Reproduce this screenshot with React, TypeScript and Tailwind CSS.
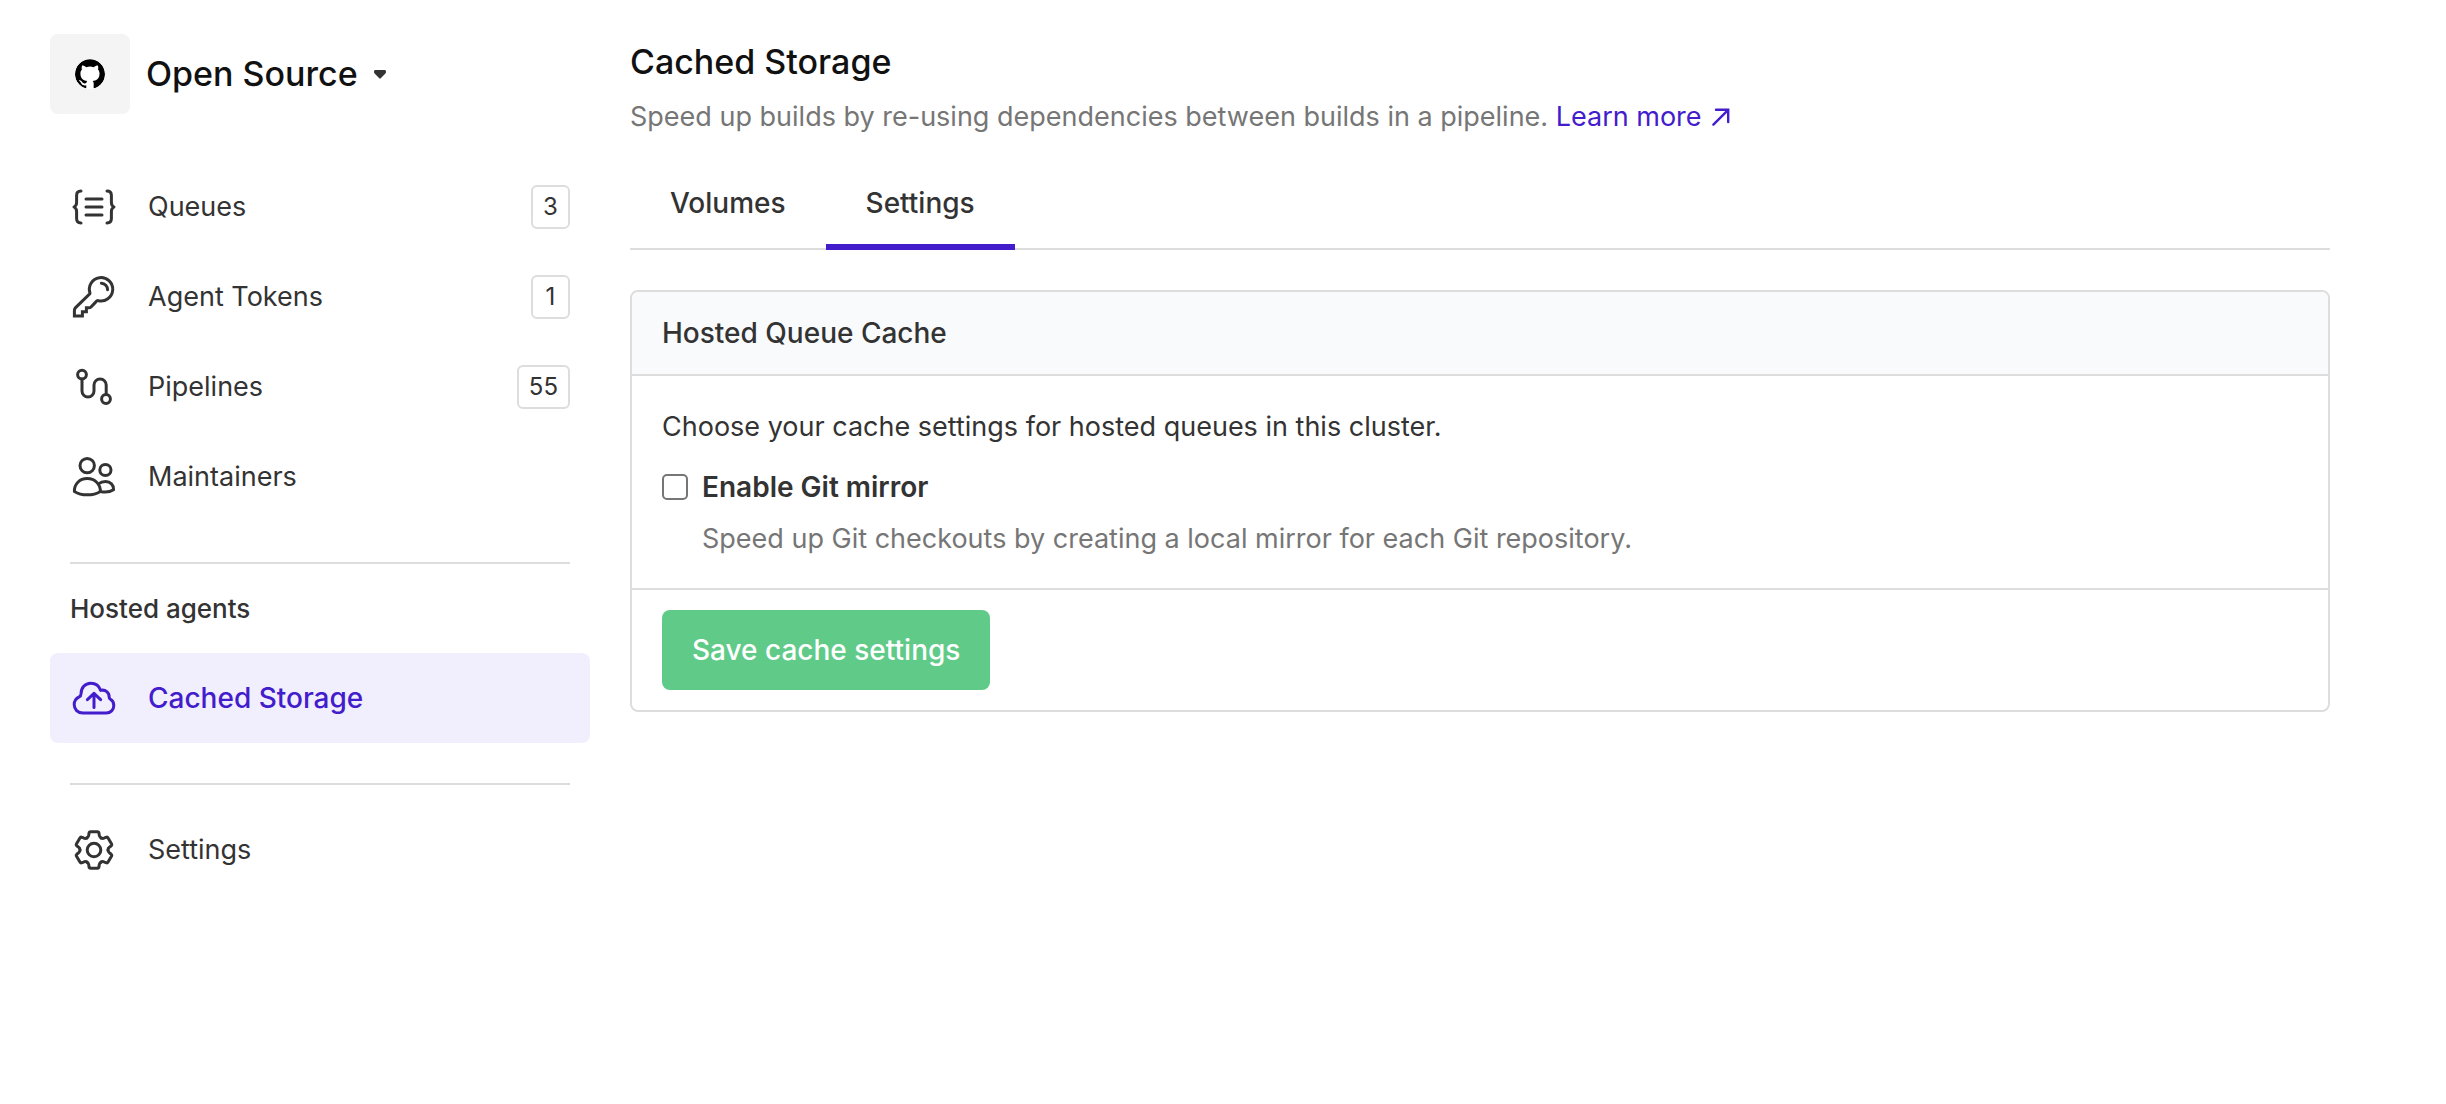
import type { ReactNode } from "react";
import { SiGithub } from "react-icons/si";

function Icon({ children }: { children: ReactNode }) {
  return (
    <svg
      viewBox="0 0 48 48"
      className="size-12 shrink-0"
      fill="none"
      stroke="currentColor"
      strokeWidth="3"
      strokeLinecap="round"
      strokeLinejoin="round"
      aria-hidden="true"
    >
      {children}
    </svg>
  );
}

const QueuesIcon = () => (
  <Icon>
    <path d="M11 8 C8 8 6.6 9.6 6.6 12.4 V19.6 C6.6 22 5.8 23.2 4 24 C5.8 24.8 6.6 26 6.6 28.4 V35.6 C6.6 38.4 8 40 11 40" />
    <path d="M37 8 C40 8 41.4 9.6 41.4 12.4 V19.6 C41.4 22 42.2 23.2 44 24 C42.2 24.8 41.4 26 41.4 28.4 V35.6 C41.4 38.4 40 40 37 40" />
    <path d="M16 16H32M16 24H32M16 32H32" />
  </Icon>
);

const KeyIcon = () => (
  <Icon>
    <path
      strokeLinejoin="miter"
      d="M20 20.2 A11.7 11.7 0 1 1 28 27.6 C26.8 27.6 26.2 28.4 25.4 29.4 L21 34 C20.4 34.6 19.8 34.8 18.8 34.8 H16.4 V38.8 H12.4 V43 H4.4 V37.4 C4.4 36.2 4.8 35.4 5.6 34.6 L19.4 21.2 Q20 20.8 20 20.2 Z"
    />
    <path d="M31.4 10.2 A6.6 6.6 0 0 1 37.6 16.8" />
  </Icon>
);

const PipelinesIcon = () => (
  <Icon>
    <circle cx="12" cy="11.6" r="4.4" />
    <circle cx="36" cy="36" r="4.4" />
    <path d="M12 16 V28 A6 6 0 0 0 24 28 V22 A6 6 0 0 1 36.2 22 V31.4" />
  </Icon>
);

const MaintainersIcon = () => (
  <Icon>
    <circle cx="17.2" cy="12.6" r="7.2" />
    <circle cx="35.4" cy="17" r="5.6" />
    <path d="M4.4 38.4 C4.2 31 9.6 25.6 17.2 25.6 C24.8 25.6 30.4 31 30.4 38.4 C26.6 40.8 22.2 41.8 17.2 41.8 C12.4 41.8 8.2 40.8 4.4 38.4 Z" />
    <path d="M28.6 30.8 C30.6 29.2 33 28.6 35.6 28.6 C40.4 28.6 43.8 31.8 43.6 36.8 C40 39 35.4 39.6 30.6 38.6" />
  </Icon>
);

const CloudUpIcon = () => (
  <Icon>
    <path d="M13 39 C7.6 39 4.2 35.4 4.2 30.6 C4.2 27 6.2 24.2 9.2 22.8 C10.6 22.2 11 21.4 11 20 C11 13.8 15 9.2 20.8 9.2 C25.6 9.2 29.2 12 30.6 16.4 C35.4 15.2 39.4 18.4 39.2 23.4 C39.2 24.4 39.6 24.8 40.4 25.2 C42.6 26.4 43.8 28.8 43.8 31.4 C43.8 35.8 40.6 39 36.2 39 Z" />
    <path d="M24 33.4 V19.6 M17.4 25.6 L24 19.4 L30.6 25.6" />
  </Icon>
);

const GEAR_ANGLES = [0, 60, 120, 180, 240, 300];

const GearIcon = () => (
  <Icon>
    <g transform="translate(24 24)">
      <circle r="6.8" />
      {GEAR_ANGLES.map((angle) => (
        <path
          key={angle}
          transform={`rotate(${angle})`}
          d="M-7 -12.12 C-5.8 -12.8 -5.3 -13.8 -5.2 -15 L-5 -16.8 Q-4.8 -18.2 -3.4 -18.2 H3.4 Q4.8 -18.2 5 -16.8 L5.2 -15 C5.3 -13.8 5.8 -12.8 7 -12.12"
        />
      ))}
    </g>
  </Icon>
);

type NavItemProps = {
  icon: ReactNode;
  label: string;
  count?: number;
  active?: boolean;
};

function NavItem({ icon, label, count, active }: NavItemProps) {
  return (
    <a
      href="#"
      aria-current={active ? "page" : undefined}
      className={
        active
          ? "flex h-[90px] items-center gap-[30px] rounded-lg bg-[#f1eefe] px-5 text-[28px] font-medium text-[#431ccc]"
          : "flex h-[90px] items-center gap-[30px] rounded-lg px-5"
      }
    >
      {icon}
      <span className="flex-1">{label}</span>
      {count !== undefined && (
        <span className="flex h-11 min-w-[39px] items-center justify-center rounded-md border-2 border-[#dddddd] px-[10px] text-2xl">
          {count}
        </span>
      )}
    </a>
  );
}

function Sidebar() {
  return (
    <aside className="w-[540px] shrink-0">
      <button type="button" className="flex items-center gap-4 text-[#111111]">
        <span className="flex size-20 items-center justify-center rounded-lg bg-[#f4f4f4]">
          <SiGithub className="size-[30px] rounded-full bg-white text-black" />
        </span>
        <span className="text-[34px] font-medium">Open Source</span>
        <svg viewBox="0 0 12 9" className="h-[9px] w-3 fill-[#333333]" aria-hidden="true">
          <path d="M1.4 0 H10.6 Q12 0 12 1.4 V2 Q12 2.8 11.4 3.4 L7 8 Q6 9 5 8 L0.6 3.4 Q0 2.8 0 2 V1.4 Q0 0 1.4 0 Z" />
        </svg>
      </button>
      <nav className="mt-12">
        <NavItem icon={<QueuesIcon />} label="Queues" count={3} />
        <NavItem icon={<KeyIcon />} label="Agent Tokens" count={1} />
        <NavItem icon={<PipelinesIcon />} label="Pipelines" count={55} />
        <NavItem icon={<MaintainersIcon />} label="Maintainers" />
        <hr className="mx-5 mt-10 border-t-2 border-[#dddddd]" />
        <h2 className="mx-5 mt-[25px] mb-6 text-[26px] leading-10 font-medium">Hosted agents</h2>
        <NavItem icon={<CloudUpIcon />} label="Cached Storage" active />
        <hr className="mx-5 mt-10 mb-5 border-t-2 border-[#dddddd]" />
        <NavItem icon={<GearIcon />} label="Settings" />
      </nav>
    </aside>
  );
}

function Tabs() {
  return (
    <nav className="mt-11 flex border-b-2 border-[#dddddd] text-[28px] font-medium">
      <a href="#" className="px-10 pb-6">
        Volumes
      </a>
      <a
        href="#"
        aria-current="page"
        className="-mb-0.5 border-b-6 border-[#431ccc] px-10 pb-5"
      >
        Settings
      </a>
    </nav>
  );
}

function CacheForm() {
  return (
    <form className="mt-10 rounded-lg border-2 border-[#dddddd]">
      <h2 className="rounded-t-md border-b-2 border-[#dddddd] bg-[#f9fafc] px-[30px] py-5 text-[28px] font-medium">
        Hosted Queue Cache
      </h2>
      <div className="px-[30px] pt-[30px] pb-7">
        <p>Choose your cache settings for hosted queues in this cluster.</p>
        <div className="mt-[18px] flex items-center gap-[14px]">
          <input
            id="git-mirror"
            type="checkbox"
            aria-describedby="git-mirror-help"
            className="size-[26px] shrink-0 appearance-none rounded-[5px] border-2 border-[#767676] bg-white checked:bg-[#431ccc]"
          />
          <label htmlFor="git-mirror" className="text-[28px] font-semibold">
            Enable Git mirror
          </label>
        </div>
        <p id="git-mirror-help" className="mt-[10px] pl-10 text-[#767676]">
          Speed up Git checkouts by creating a local mirror for each Git repository.
        </p>
      </div>
      <div className="border-t-2 border-[#dddddd] px-[30px] py-5">
        <button
          type="button"
          className="h-20 rounded-lg bg-[#60cb88] px-[30px] text-[28px] font-medium text-white"
        >
          Save cache settings
        </button>
      </div>
    </form>
  );
}

export default function App() {
  return (
    <div className="flex min-h-screen gap-10 bg-white pr-[116px] pl-[50px] font-['Inter',sans-serif] text-[27px] leading-[42px] text-[#333333]">
      <div className="pt-[34px]">
        <Sidebar />
      </div>
      <main className="min-w-0 flex-1 pt-[38px]">
        <h1 className="text-[34px] leading-12 font-medium text-[#111111]">Cached Storage</h1>
        <p className="mt-[10px] text-[#767676]">
          Speed up builds by re-using dependencies between builds in a pipeline.{" "}
          <a href="#" className="text-[#431ccc]">
            Learn more
            <svg
              viewBox="0 0 18 18"
              className="ml-[10px] inline-block size-[18px] align-baseline"
              fill="none"
              stroke="currentColor"
              strokeWidth="2.4"
              strokeLinecap="round"
              aria-hidden="true"
            >
              <path d="M1.4 16.6 L16.2 1.8 M4 1.8 H16.2 V14" />
            </svg>
          </a>
        </p>
        <Tabs />
        <CacheForm />
      </main>
    </div>
  );
}
